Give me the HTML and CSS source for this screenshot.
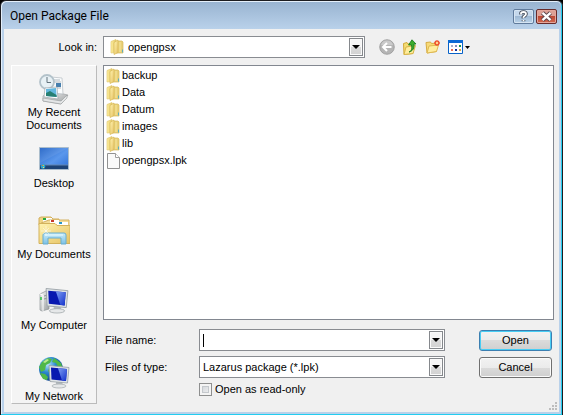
FILE: index.html
```html
<!DOCTYPE html>
<html lang="en">
<head>
<meta charset="utf-8">
<meta name="viewport" content="width=device-width, initial-scale=1">
<title>Open Package File</title>
<link rel="stylesheet" href="styles.css">
</head>
<body>
<svg class="defs" aria-hidden="true">
  <defs>
    <linearGradient id="gold" x1="0" x2="1" y2="1"><stop stop-color="#fff3b0"/><stop offset="1" stop-color="#e6c264"/></linearGradient>
    <linearGradient id="goldFlat" x1="0" x2="1"><stop stop-color="#fff0a0"/><stop offset="1" stop-color="#e2c665"/></linearGradient>
    <linearGradient id="sky" x1="0" y1="0" x2="1" y2="1"><stop stop-color="#1d5fc4"/><stop offset=".55" stop-color="#5a97ec"/><stop offset="1" stop-color="#2c6fd6"/></linearGradient>
    <linearGradient id="glass" x1="0" y1="0" x2="0" y2="1"><stop stop-color="#c9ecfa"/><stop offset="1" stop-color="#7cc0e4"/></linearGradient>
    <linearGradient id="metal" x1="0" x2="1" y2="1"><stop stop-color="#fafafa"/><stop offset="1" stop-color="#989c9e"/></linearGradient>
    <linearGradient id="shine" x1="0" y1="0" x2="1" y2="1"><stop stop-color="#7f9ff2"/><stop offset="1" stop-color="#1130cc"/></linearGradient>
    <radialGradient id="sea" cx=".35" cy=".3" r=".75"><stop stop-color="#b8e8fa"/><stop offset=".45" stop-color="#2d8bd0"/><stop offset="1" stop-color="#093c8c"/></radialGradient>
    <symbol id="folder" viewBox="0 0 14 16">
      <path d="M1 2.500 6 .5v13L1 14z" fill="url(#goldFlat)" stroke="#e3ca74" stroke-width=".7"/>
      <path d="M6 2h6l1 1v11H6z" fill="#e8d078" stroke="#d6b95c" stroke-width=".7"/>
      <path d="M4 3.500 8 1v12.500L4 15.500z" fill="url(#gold)" stroke="#d9b957" stroke-width=".7"/>
      <path d="M10 3v10" stroke="#f7e69c"/><path d="M12.500 10.500v3" stroke="#5cadc0"/>
    </symbol>
    <symbol id="monitor" viewBox="0 0 22 24">
      <path d="M8 17h6l1 4H8z" fill="#b8bec2"/>
      <ellipse cx="11" cy="21.500" rx="7" ry="2" fill="#e6e8e9" stroke="#a2a8ab" stroke-width=".7"/>
      <path d="M1 1 21 3 19.500 18.500 2 17z" fill="#dfe4e7" stroke="#98a0a5" stroke-width=".8"/>
      <path d="M3 3 19 4.500 18 16.500 3.500 15z" fill="#0818b0"/>
      <path d="M10 3.700 19 4.500 18 16.500 14 16z" fill="url(#shine)"/>
    </symbol>
  </defs>
</svg>
<main class="dialog">
  <header class="titlebar">
    <h1 class="title">Open Package File</h1>
    <button class="caption" type="button" aria-label="Help"><svg width="13" height="13" viewBox="0 0 13 13"><path d="M4 4.500V3.500Q4 2 6.500 2T9 4Q9 5 7.500 6T6.500 8M6.500 10v1.200" fill="none" stroke="#424b58" stroke-width="3.600"/><path d="M4 4.500V3.500Q4 2 6.500 2T9 4Q9 5 7.500 6T6.500 8M6.500 10v1.200" fill="none" stroke="#fff" stroke-width="1.800"/></svg></button>
    <button class="caption close" type="button" aria-label="Close"><svg width="13" height="11" viewBox="0 0 13 11"><path d="M2.500 1.800 10.500 9.200M10.500 1.800 2.500 9.200" stroke="#56424a" stroke-width="4.200"/><path d="M2.500 1.800 10.500 9.200M10.500 1.800 2.500 9.200" stroke="#fff" stroke-width="2.400"/></svg></button>
  </header>
  <form class="body">
    <label class="look-label" for="look">Look in:</label>
    <div class="toolbar">
      <div class="combo look">
        <svg class="combo-icon" width="14" height="16"><use href="#folder"/></svg>
        <select id="look" class="field with-icon"><option>opengpsx</option></select>
        <span class="arrow"></span>
      </div>
      <div class="tools">
        <button class="tool" type="button" aria-label="Back"><svg width="16" height="16" viewBox="0 0 16 16"><circle cx="8" cy="8" r="7.300" fill="#b5b5b5" stroke="#989898" stroke-width=".8"/><path d="M2 6a6.300 6.300 0 0 1 12 0z" fill="#cacaca"/><path d="M12.500 8H4.500M8 4 4 8l4 4" fill="none" stroke="#fff" stroke-width="2"/></svg></button>
        <button class="tool" type="button" aria-label="Up one level"><svg width="16" height="16" viewBox="0 0 16 16"><path d="M1.500 4.500 5 3.500l1 1.500 5-.5v10l-9 1z" fill="#f5dc74" stroke="#d2a93a"/><path d="M4 8 13.500 6.500 11 14.500 2 15.500z" fill="#ffed9d" stroke="#d8b548"/><path d="M7 13c3-1 3-4 2.500-7H6.500L10 .8 14 5h-2c.5 4-1 7-5 8z" fill="#3dac2e" stroke="#13751b" stroke-width=".8"/></svg></button>
        <button class="tool" type="button" aria-label="New folder"><svg width="16" height="16" viewBox="0 0 16 16"><path d="M1 3.500 5.500 3l1 1.500 5-.5v8.500L2 14z" fill="#f7da78" stroke="#d7ac43"/><path d="M4 7 13.500 6 11.500 12.500 2 14z" fill="#ffed9f" stroke="#dfb952"/><path d="M12 1v6M9 4h6M10 2l4 4M14 2l-4 4" stroke="#ef4e2b" stroke-width="1.300"/><circle cx="12" cy="4" r="1.200" fill="#ffd48c"/></svg></button>
        <button class="tool views" type="button" aria-label="Views"><svg width="22" height="16" viewBox="0 0 22 16"><path d="M.5 1.500h14v13H.5z" fill="#fff" stroke="#0862c8"/><path d="M0 1h15v3H0z" fill="#0b6ad5"/><path d="M3 6h2v2H3z" fill="#a8b0cc"/><path d="M7 6h2v2H7z" fill="#8290bd"/><path d="M11 6h2v2h-2z" fill="#169347"/><path d="M3 10h2v2H3z" fill="#e96e55"/><path d="M7 10h2v2H7z" fill="#14339c"/><path d="M11 10h2v2h-2z" fill="#d5a647"/><path d="M17 7h5l-2.500 3z" fill="#000"/></svg></button>
      </div>
    </div>
    <nav class="places" aria-label="Places">
      <a class="place" href="#recent"><svg width="32" height="32" viewBox="0 0 32 32"><path d="M5 23 12 18 30 22 23 31 5 28z" fill="url(#metal)" stroke="#a0a4a6" stroke-width=".7"/><path d="M13 4 24 5l1 16-12-1z" fill="#fafcfd" stroke="#b4bcc1" stroke-width=".7"/><path d="M15 7h7M15 9h8M19 12h4M19 15h4" stroke="#afb8bf"/><path d="M18 10h5v4h-5z" fill="#467fae"/><circle cx="9" cy="9" r="7" fill="#e8f1f5" stroke="#b3c2ca" stroke-width="1.800"/><path d="M9 4v5.500h4" fill="none" stroke="#63737d"/><path d="m7 15 12-1 1 12-14-2z" fill="#fff" stroke="#9ba5aa" stroke-width=".7"/><path d="m8 16 10-1 .7 9L8 23z" fill="#64b8df"/><path d="m8 20 4-2 6.500 4 .2 2L8 23z" fill="#277f72"/><path d="M5 25 23 28 29 22v3l-6 6-18-3z" fill="#e4e6e7" stroke="#969a9b" stroke-width=".6"/></svg><span class="place-name">My Recent Documents</span></a>
      <a class="place" href="#desktop"><svg width="32" height="32" viewBox="0 0 32 32"><path d="M1.500 3.500h29v22h-29z" fill="url(#sky)" stroke="#abbdcc"/><path d="M2 21h28v4H2z" fill="#1d4375"/><path d="M2 21h28" stroke="#6386b1"/><path d="M2 4h28L2 19z" fill="#fff" opacity=".08"/><circle cx="5" cy="22.500" r="2.300" fill="#29a6d1"/><path d="M4 21h1v1H4z" fill="#f07043"/><path d="M5 21h1v1H5z" fill="#99df65"/><path d="M5 23h1v1H5z" fill="#ffdf61"/></svg><span class="place-name">Desktop</span></a>
      <a class="place" href="#documents"><svg width="32" height="32" viewBox="0 0 32 32"><path d="M1 6V3l2-1h10l2 2h6v6H1z" fill="#f0d584" stroke="#d2ae5c"/><path d="M5 3h9v4H5z" fill="#fff"/><path d="M5 3h3v2H5z" fill="#27a93d"/><path d="M3 8l8-3h20v7H3z" fill="#f3dc98" stroke="#d4b264"/><path d="M12 5h9v4h-9z" fill="#fff"/><path d="M13 5h3v2h-3z" fill="#c83b2b"/><path d="M19 7h11v5H19z" fill="#fff"/><path d="M21 7h3v2h-3z" fill="#2696c9"/><path d="M1 8.500h16l2 2h13v18H1z" fill="url(#gold)" stroke="#d3b25c"/><path d="M5 29v-9q0-2 2-2h19q2 0 2 2v9h-5v-6H10v6z" fill="url(#glass)" stroke="#69aed0"/><path d="M7 20h18" stroke="#e9fcff"/><path d="M8 11v10M3 16h10M5 13l6 6M11 13l-6 6" stroke="#fff" stroke-width=".5"/></svg><span class="place-name">My Documents</span></a>
      <a class="place" href="#computer"><svg width="32" height="32" viewBox="0 0 32 32"><path d="M2 8 8 5l3 1v17l-7 2-2-1z" fill="url(#metal)" stroke="#8f9598" stroke-width=".7"/><path d="m2 8 3 1v16" fill="none" stroke="#fff"/><path d="M3 11v3" stroke="#2fc344" stroke-width="1.500"/><path d="M6 10l4-1M6 13l4-1" stroke="#8e9598"/><use href="#monitor" x="7" y="1" width="24" height="27"/></svg><span class="place-name">My Computer</span></a>
      <a class="place" href="#network"><svg width="32" height="32" viewBox="0 0 32 32"><circle cx="13" cy="12" r="12" fill="url(#sea)"/><path d="m4 5 6-4 4 1-2 4-4 2-1 5-4 2-2-5zM16 1l7 5 2 6-5-2-2-4-4-1zM2 16l5 1 3 3-1 3-4-1zM12 9l5 1 2 5-5 3-4-4z" fill="#50b848"/><path d="m5 5 4-3 2 1-4 3z" fill="#bced8d"/><use href="#monitor" x="10" y="7" width="22" height="25"/></svg><span class="place-name">My Network</span></a>
    </nav>
    <ul class="files">
      <li class="file"><svg width="14" height="16"><use href="#folder"/></svg>backup</li>
      <li class="file"><svg width="14" height="16"><use href="#folder"/></svg>Data</li>
      <li class="file"><svg width="14" height="16"><use href="#folder"/></svg>Datum</li>
      <li class="file"><svg width="14" height="16"><use href="#folder"/></svg>images</li>
      <li class="file"><svg width="14" height="16"><use href="#folder"/></svg>lib</li>
      <li class="file"><svg width="14" height="16" viewBox="0 0 14 16"><path d="M1.500.5h8l4 4v11h-12z" fill="#fafafa" stroke="#929292"/><path d="M9.500.5v4h4" fill="#fff" stroke="#a0a0a0"/></svg>opengpsx.lpk</li>
    </ul>
    <div class="details">
      <label for="name">File name:</label>
      <div class="combo"><input id="name" class="field caret" type="text"><span class="arrow"></span></div>
      <button class="action primary" type="submit">Open</button>
      <label for="type">Files of type:</label>
      <div class="combo"><select id="type" class="field"><option>Lazarus package (*.lpk)</option></select><span class="arrow"></span></div>
      <button class="action" type="button">Cancel</button>
      <label class="readonly"><input class="check" type="checkbox">Open as read-only</label>
    </div>
  </form>
  <svg class="grip" width="9" height="9" viewBox="0 0 9 9" aria-hidden="true"><path d="M6 0h2v2H6zM3 3h2v2H3zM6 3h2v2H6zM0 6h2v2H0zM3 6h2v2H3zM6 6h2v2H6z" fill="#bdbdbd"/></svg>
</main>
</body>
</html>
```
FILE: styles.css
```css
* { box-sizing: border-box; }

body {
  margin: 0;
  background: #000;
  color: #000;
  font: 11px/13px "Liberation Sans", Arial, sans-serif;
}

button, input, select { font: inherit; color: inherit; }

.defs { position: absolute; width: 0; height: 0; }

.dialog {
  position: relative;
  display: flex;
  flex-direction: column;
  min-height: 100vh;
  padding: 0 3px 3px;
  border: 1px solid #1c1c20;
  border-radius: 6px 6px 0 0;
  background: #b9d1ea;
  box-shadow: inset -1px -1px #22cdf0, inset 1px 1px #e4effa;
}

.titlebar {
  display: flex;
  align-items: center;
  gap: 2px;
  height: 27px;
  margin: 1px -2px 0;
  padding: 1px 4px 0 8px;
  border-radius: 5px 5px 0 0;
  background: linear-gradient(#99b4d1, #b9d1ea);
}

.title {
  flex: 1;
  margin: 0;
  font: 12px/16px Roboto, sans-serif;
}

.caption {
  display: grid;
  place-items: center;
  width: 21px;
  height: 15px;
  padding: 0;
  border: 1px solid #607b9c;
  border-radius: 2px;
  background: linear-gradient(#c5d8ec 50%, #9fb9d4 50%, #b9d3ea);
  box-shadow: inset 0 0 0 1px #d6e5f3;
}

.close {
  border-color: #682b2b;
  background: linear-gradient(#dda196 50%, #bd4935 50%, #d36a51);
  box-shadow: inset 0 0 0 1px #e3a69b;
}

.body {
  flex: 1;
  display: grid;
  grid-template-columns: 86px 1fr;
  grid-template-rows: 22px 1fr auto;
  column-gap: 6px;
  padding: 7px 5px 8px 7px;
  background: #f0f0f0;
}

.look-label { align-self: center; text-align: right; }

.toolbar { display: flex; align-items: center; gap: 14px; }

.look { width: 58%; }

.tools { display: flex; gap: 7px; }

.tool { display: flex; padding: 0; border: 0; background: none; }

.combo { position: relative; height: 22px; }

.combo-icon { position: absolute; left: 7px; top: 3px; }

.field {
  display: block;
  width: 100%;
  height: 100%;
  padding: 0 20px 0 3px;
  border: 1px solid #898c91;
  border-radius: 0;
  outline: 0;
  background: #fff;
  appearance: none;
}

.with-icon { padding-left: 24px; }

.caret { background: linear-gradient(#000, #000) 3px 4px / 1px 13px no-repeat #fff; }

.arrow {
  position: absolute;
  top: 2px;
  right: 2px;
  bottom: 2px;
  display: grid;
  place-items: center;
  width: 14px;
  border: 1px solid #85888c;
  background: linear-gradient(#f5f5f5 50%, #dadada 50%, #d2d2d2);
  box-shadow: inset 0 0 0 1px #fafafa;
  pointer-events: none;
}

.arrow::after {
  content: "";
  border: 4px solid transparent;
  border-top-color: #000;
  border-bottom: 0;
}

.places {
  grid-row: 2 / 4;
  margin-top: 7px;
  padding-top: 7px;
  border: 1px solid #fff;
  border-right-color: #bbb;
  border-bottom-color: #bbb;
  background: #f4f4f4;
}

.place {
  display: flex;
  flex-direction: column;
  align-items: center;
  gap: 1px;
  min-height: 71px;
  color: inherit;
  text-align: center;
  text-decoration: none;
}

.place:last-child { min-height: 45px; }

.place-name { max-width: 78px; }

.files {
  margin: 7px 0 0;
  padding: 1px 2px;
  border: 1px solid #828790;
  background: #fff;
  list-style: none;
  line-height: 17px;
}

.file { display: flex; align-items: center; gap: 2px; height: 17px; }

.details {
  display: grid;
  grid-template-columns: 94px minmax(0, 1fr) 73px;
  align-items: center;
  row-gap: 5px;
  padding: 9px 2px 8px 2px;
}

.details .combo { margin-right: 34px; }

.action {
  height: 21px;
  padding: 0;
  border: 1px solid #707070;
  border-radius: 3px;
  background: linear-gradient(#f2f2f2, #ebebeb 50%, #dbdbdb 50%, #cfcfcf);
  box-shadow: inset 0 0 0 1px #fbfbfb;
}

.primary {
  border-color: #3c7fb1;
  box-shadow: inset 0 0 0 1px #48cdf4;
}

.readonly {
  grid-column: 2;
  display: flex;
  align-items: center;
  gap: 3px;
}

.check {
  width: 13px;
  height: 13px;
  margin: 0;
  border: 1px solid #8e8f8f;
  outline: 1px solid #c4c8cc;
  outline-offset: -4px;
  background: linear-gradient(135deg, #cbcfd5, #f6f6f6);
  box-shadow: inset 0 0 0 2px #f4f4f4;
  appearance: none;
}

.grip { position: absolute; right: 4px; bottom: 4px; }
```
